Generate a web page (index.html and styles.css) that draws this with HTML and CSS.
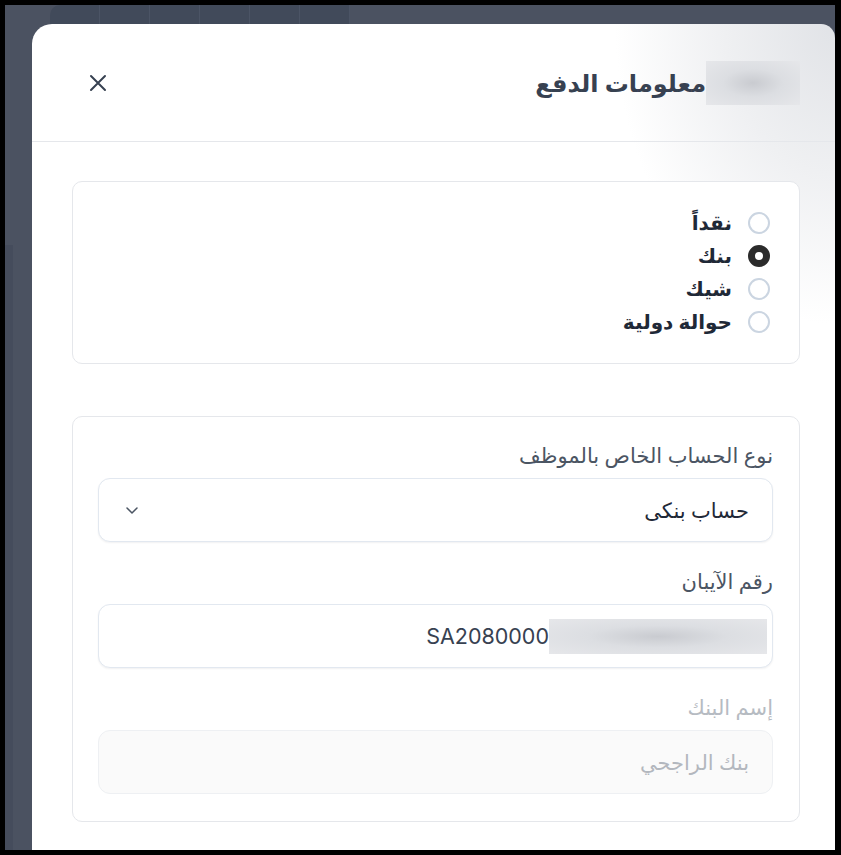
FILE: index.html
```html
<!DOCTYPE html>
<html lang="ar" dir="rtl">
<head>
  <meta charset="UTF-8" />
  <meta name="viewport" content="width=device-width, initial-scale=1" />
  <title>معلومات الدفع</title>
  <link rel="stylesheet" href="styles.css">
</head>
<body>
  <div class="screen">
    <div class="backdrop-bar">
      <span></span><span></span><span></span><span></span><span></span><span></span>
    </div>
    <div class="backdrop-side"></div>

    <div class="modal">
      <header class="modal-head">
        <h2 class="modal-title"><span class="redact redact-title"></span>معلومات الدفع</h2>
        <button class="close-btn" aria-label="إغلاق">
          <svg width="20" height="20" viewBox="0 0 20 20" fill="none" stroke="#374151" stroke-width="2" stroke-linecap="round">
            <path d="M3 3 L17 17 M17 3 L3 17" />
          </svg>
        </button>
      </header>

      <div class="modal-body">
        <div class="card methods">
          <label class="radio-row"><span class="radio"></span>نقداً</label>
          <label class="radio-row"><span class="radio checked"></span>بنك</label>
          <label class="radio-row"><span class="radio"></span>شيك</label>
          <label class="radio-row"><span class="radio"></span>حوالة دولية</label>
        </div>

        <div class="card fields">
          <div class="field">
            <div class="field-label">نوع الحساب الخاص بالموظف</div>
            <div class="input select">
              <span>حساب بنكى</span>
              <svg width="16" height="16" viewBox="0 0 16 16" fill="none" stroke="#4b5563" stroke-width="1.5" stroke-linecap="round" stroke-linejoin="round">
                <path d="M3 6 L8 11 L13 6" />
              </svg>
            </div>
          </div>

          <div class="field">
            <div class="field-label">رقم الآيبان</div>
            <div class="input iban">
              <span class="redact redact-iban"></span><span class="latin">SA2080000</span>
            </div>
          </div>

          <div class="field disabled">
            <div class="field-label">إسم البنك</div>
            <div class="input">
              <span>بنك الراجحي</span>
            </div>
          </div>
        </div>
      </div>
    </div>
  </div>
</body>
</html>
```

FILE: styles.css
```css
html, body {
  margin: 0;
  padding: 0;
  background: #000;
  font-family: "Noto Sans", "DejaVu Sans", sans-serif;
  color: #1f2937;
}
.screen {
  position: relative;
  margin: 5px 6px 0 5px;
  height: 845px;
  background: #4b5261;
  overflow: hidden;
  direction: ltr;
}
.backdrop-bar {
  position: absolute;
  top: 0;
  left: 45px;
  width: 300px;
  height: 19px;
  display: flex;
  background: #414a5a;
  border-top-left-radius: 10px;
}
.backdrop-bar span {
  flex: 1;
  border-right: 1px solid #4b5465;
}
.backdrop-side {
  position: absolute;
  left: 0;
  top: 240px;
  width: 8px;
  bottom: 0;
  background: #454c5c;
}
.modal {
  position: relative;
  margin: 19px 0 0 27px;
  height: 840px;
  background: radial-gradient(ellipse 220px 300px at 100% 0%, #e1e3e7 0%, #eff0f2 50%, #ffffff 100%);
  border-radius: 20px 14px 0 0;
  direction: rtl;
}
.modal-head {
  height: 117px;
  border-bottom: 1px solid #e5e7eb;
  display: flex;
  align-items: center;
  justify-content: space-between;
  padding: 0 35px 0 56px;
}
.modal-title {
  margin: 0;
  display: flex;
  align-items: center;
  font-size: 24px;
  font-weight: 700;
  color: #374151;
}
.redact {
  display: inline-block;
  background: radial-gradient(ellipse at 50% 50%, #c9cbd0 0%, #dcdee2 45%, #e6e7ea 100%);
}
.redact-title {
  width: 94px;
  height: 44px;
}
.close-btn {
  border: 0;
  background: none;
  padding: 0;
  width: 20px;
  height: 20px;
  cursor: pointer;
}
.modal-body {
  padding: 39px 35px 0 40px;
}
.card {
  border: 1px solid #e5e7eb;
  border-radius: 10px;
  background: #fff;
}
.methods {
  padding: 24px 29px 25px;
  display: flex;
  flex-direction: column;
}
.radio-row {
  display: flex;
  align-items: center;
  gap: 16px;
  height: 33px;
  font-size: 20px;
  font-weight: 600;
  color: #1f2937;
}
.radio {
  width: 22px;
  height: 22px;
  box-sizing: border-box;
  border: 2px solid #cbd5e1;
  border-radius: 50%;
  background: #fff;
}
.radio.checked {
  border: 7px solid #2b2b2b;
}
.fields {
  margin-top: 52px;
  padding: 24px 26px 27px 25px;
  display: flex;
  flex-direction: column;
  gap: 25px;
}
.field-label {
  height: 28px;
  line-height: 28px;
  font-size: 21px;
  color: #4b5563;
  margin-bottom: 9px;
}
.input {
  height: 64px;
  box-sizing: border-box;
  border: 1px solid #e2e8f0;
  border-radius: 12px;
  box-shadow: 0 1px 2px rgba(15, 23, 42, 0.06);
  display: flex;
  align-items: center;
  padding: 0 23px 0 25px;
  font-size: 21px;
  color: #1f2937;
  background: #fff;
}
.select {
  justify-content: space-between;
}
.iban {
  padding-right: 5px;
}
.latin {
  font-family: "Inter", "Roboto", sans-serif;
  font-size: 21.5px;
  color: #374151;
}
.redact-iban {
  width: 218px;
  height: 35px;
}
.disabled .field-label {
  color: #b6bbc2;
}
.disabled .input {
  background: #fafafa;
  border-color: #eef0f3;
  box-shadow: none;
  color: #b3b7be;
}
```
